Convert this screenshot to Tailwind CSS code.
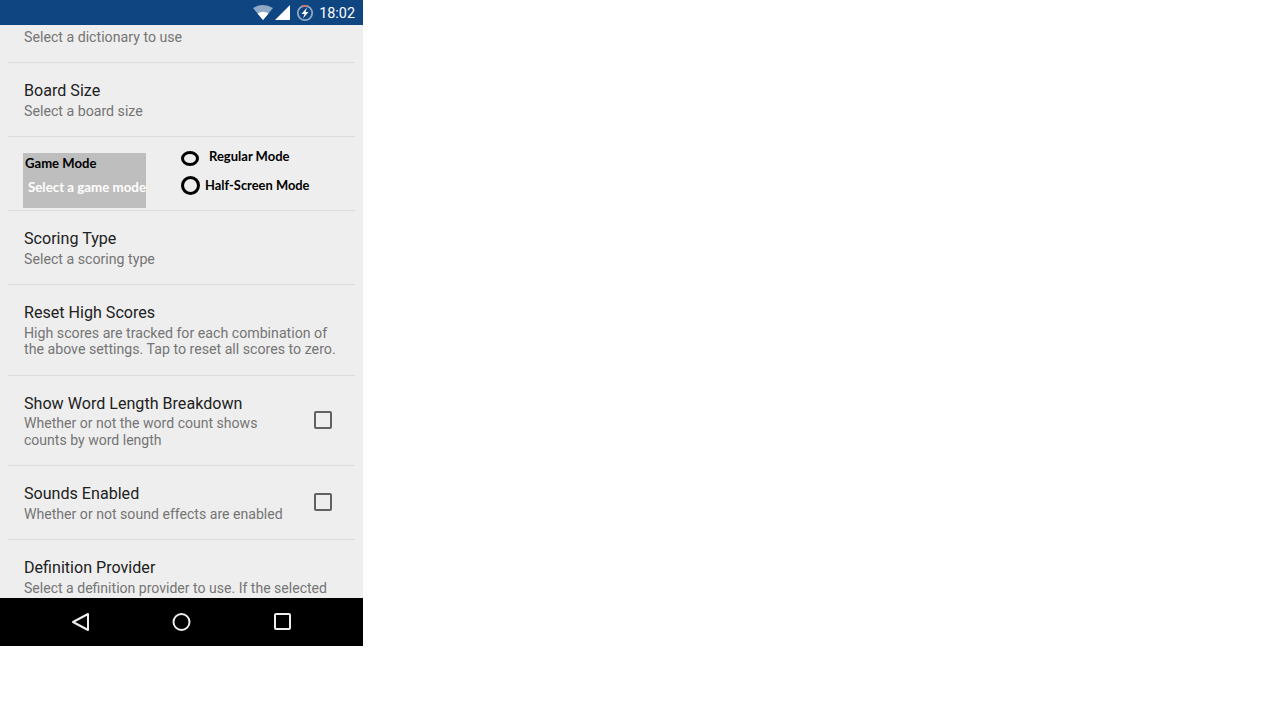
<!DOCTYPE html>
<html lang="en">
  <head>
    <meta charset="UTF-8" />
    <title>Settings</title>
    <script src="https://cdn.jsdelivr.net/npm/@tailwindcss/browser@4"></script>
  </head>
  <body class="bg-white font-['Roboto',sans-serif]">
    <div class="w-[363px] h-[646px] flex flex-col bg-[#eeeeee]">
      <!-- status bar -->
      <div class="h-[25px] shrink-0 bg-[#0f4581] flex items-center justify-end pr-[8px] text-white">
        <svg class="w-[20px] h-[15px]" viewBox="0 0 20 15">
          <path d="M0 3 Q10 -3 20 3 L10 15 Z" fill="#8fa9c6" />
          <path d="M4.5 8.5 Q10 5 15.500 8.500 L10 15 Z" fill="#ffffff" />
        </svg>
        <svg class="w-[15px] h-[15px] ml-[2px]" viewBox="0 0 15 15">
          <path d="M15 0 V15 H0 Z" fill="#ffffff" />
        </svg>
        <svg class="w-[18px] h-[18px] ml-[6px]" viewBox="0 0 18 18">
          <circle cx="9" cy="9" r="7.200" fill="none" stroke="#8fa9c6" stroke-width="1.800" />
          <path d="M6 2.400 A7.200 7.200 0 0 1 11.500 2.300" fill="none" stroke="#d9705f" stroke-width="1.800" />
          <path d="M11 3.500 L5.500 10 H8.500 L7 14.500 L12.500 8 H9.500 Z" fill="#ffffff" />
        </svg>
        <span class="ml-[5px] mt-[3px] text-[14.400px] leading-none">18:02</span>
      </div>

      <!-- settings list -->
      <div class="flex-1 min-h-0 overflow-hidden">
        <div class="h-[38px] mx-[8px] px-[16px] border-b border-[#dcdcdc] flex flex-col justify-end pb-[16px]">
          <p class="text-[14.180px] leading-[17px] text-[#757575]">Select a dictionary to use</p>
        </div>

        <div class="h-[74px] mx-[8px] px-[16px] pt-[18px] border-b border-[#dcdcdc]">
          <p class="text-[16.100px] leading-5 text-[#212121]">Board Size</p>
          <p class="mt-[2px] text-[14.180px] leading-[17px] text-[#757575]">Select a board size</p>
        </div>

        <!-- pasted-in game mode mockup -->
        <div class="h-[74px] mx-[8px] border-b border-[#dcdcdc] flex font-['Lato',sans-serif] font-bold">
          <div class="ml-[15px] mt-[16px] w-[123px] h-[55px] bg-[#bebebe] overflow-hidden">
            <p class="ml-[2px] mt-[2px] text-[13.100px] leading-4 text-black">Game Mode</p>
            <p class="ml-[5px] mt-[8px] text-[13.300px] leading-4 text-white whitespace-nowrap">Select a game mode</p>
          </div>
          <div class="ml-[35px] mt-[11px]">
            <div class="flex items-start h-[28px]">
              <span class="mt-[3px] w-[18px] h-[15px] rounded-[50%] border-[3px] border-black"></span>
              <span class="ml-[10px] text-[13px] leading-4 text-black">Regular Mode</span>
            </div>
            <div class="flex items-center h-[20px] -mt-[1px]">
              <span class="w-[19px] h-[19px] rounded-full border-[3px] border-black"></span>
              <span class="ml-[5px] -mt-[1px] text-[12.900px] leading-4 text-black">Half-Screen Mode</span>
            </div>
          </div>
        </div>

        <div class="h-[74px] mx-[8px] px-[16px] pt-[18px] border-b border-[#dcdcdc]">
          <p class="text-[16.100px] leading-5 text-[#212121]">Scoring Type</p>
          <p class="mt-[2px] text-[14.180px] leading-[17px] text-[#757575]">Select a scoring type</p>
        </div>

        <div class="h-[91px] mx-[8px] px-[16px] pt-[18px] border-b border-[#dcdcdc]">
          <p class="text-[16.100px] leading-5 text-[#212121]">Reset High Scores</p>
          <p class="mt-[2px] text-[14.180px] leading-4 text-[#757575]">High scores are tracked for each combination of<br />the above settings. Tap to reset all scores to zero.</p>
        </div>

        <div class="h-[90px] mx-[8px] pl-[16px] pr-[23px] pb-[1px] border-b border-[#dcdcdc] flex items-center">
          <div class="flex-1 pt-[2px]">
            <p class="text-[16.100px] leading-5 text-[#212121]">Show Word Length Breakdown</p>
            <p class="mt-[1px] text-[14.050px] leading-[16.500px] text-[#757575]">Whether or not the word count shows<br />counts by word length</p>
          </div>
          <span class="w-[18px] h-[18px] rounded-[2px] border-2 border-[#616161]"></span>
        </div>

        <div class="h-[74px] mx-[8px] pl-[16px] pr-[23px] pb-[1px] border-b border-[#dcdcdc] flex items-center">
          <div class="flex-1 pt-[3px]">
            <p class="text-[16.100px] leading-5 text-[#212121]">Sounds Enabled</p>
            <p class="mt-[2px] text-[14.100px] leading-[17px] text-[#757575]">Whether or not sound effects are enabled</p>
          </div>
          <span class="w-[18px] h-[18px] rounded-[2px] border-2 border-[#616161]"></span>
        </div>

        <div class="mx-[8px] px-[16px] pt-[18px]">
          <p class="text-[16.100px] leading-5 text-[#212121]">Definition Provider</p>
          <p class="mt-[2px] text-[14.050px] leading-[17px] text-[#757575] whitespace-nowrap">Select a definition provider to use. If the selected</p>
        </div>
      </div>

      <!-- nav bar -->
      <div class="h-[48px] shrink-0 bg-black relative">
        <svg class="absolute left-[71px] top-[14px] w-[19px] h-[20px]" viewBox="0 0 19 20">
          <path d="M17 2 V18 L2 10 Z" fill="none" stroke="#eeeeee" stroke-width="2" stroke-linejoin="round" />
        </svg>
        <svg class="absolute left-[172px] top-[14px] w-[20px] h-[20px]" viewBox="0 0 20 20">
          <circle cx="9.500" cy="10" r="8" fill="none" stroke="#eeeeee" stroke-width="2" />
        </svg>
        <svg class="absolute left-[273px] top-[14px] w-[20px] h-[20px]" viewBox="0 0 20 20">
          <rect x="2" y="2" width="15" height="15" rx="1" fill="none" stroke="#eeeeee" stroke-width="2" />
        </svg>
      </div>
    </div>
  </body>
</html>
